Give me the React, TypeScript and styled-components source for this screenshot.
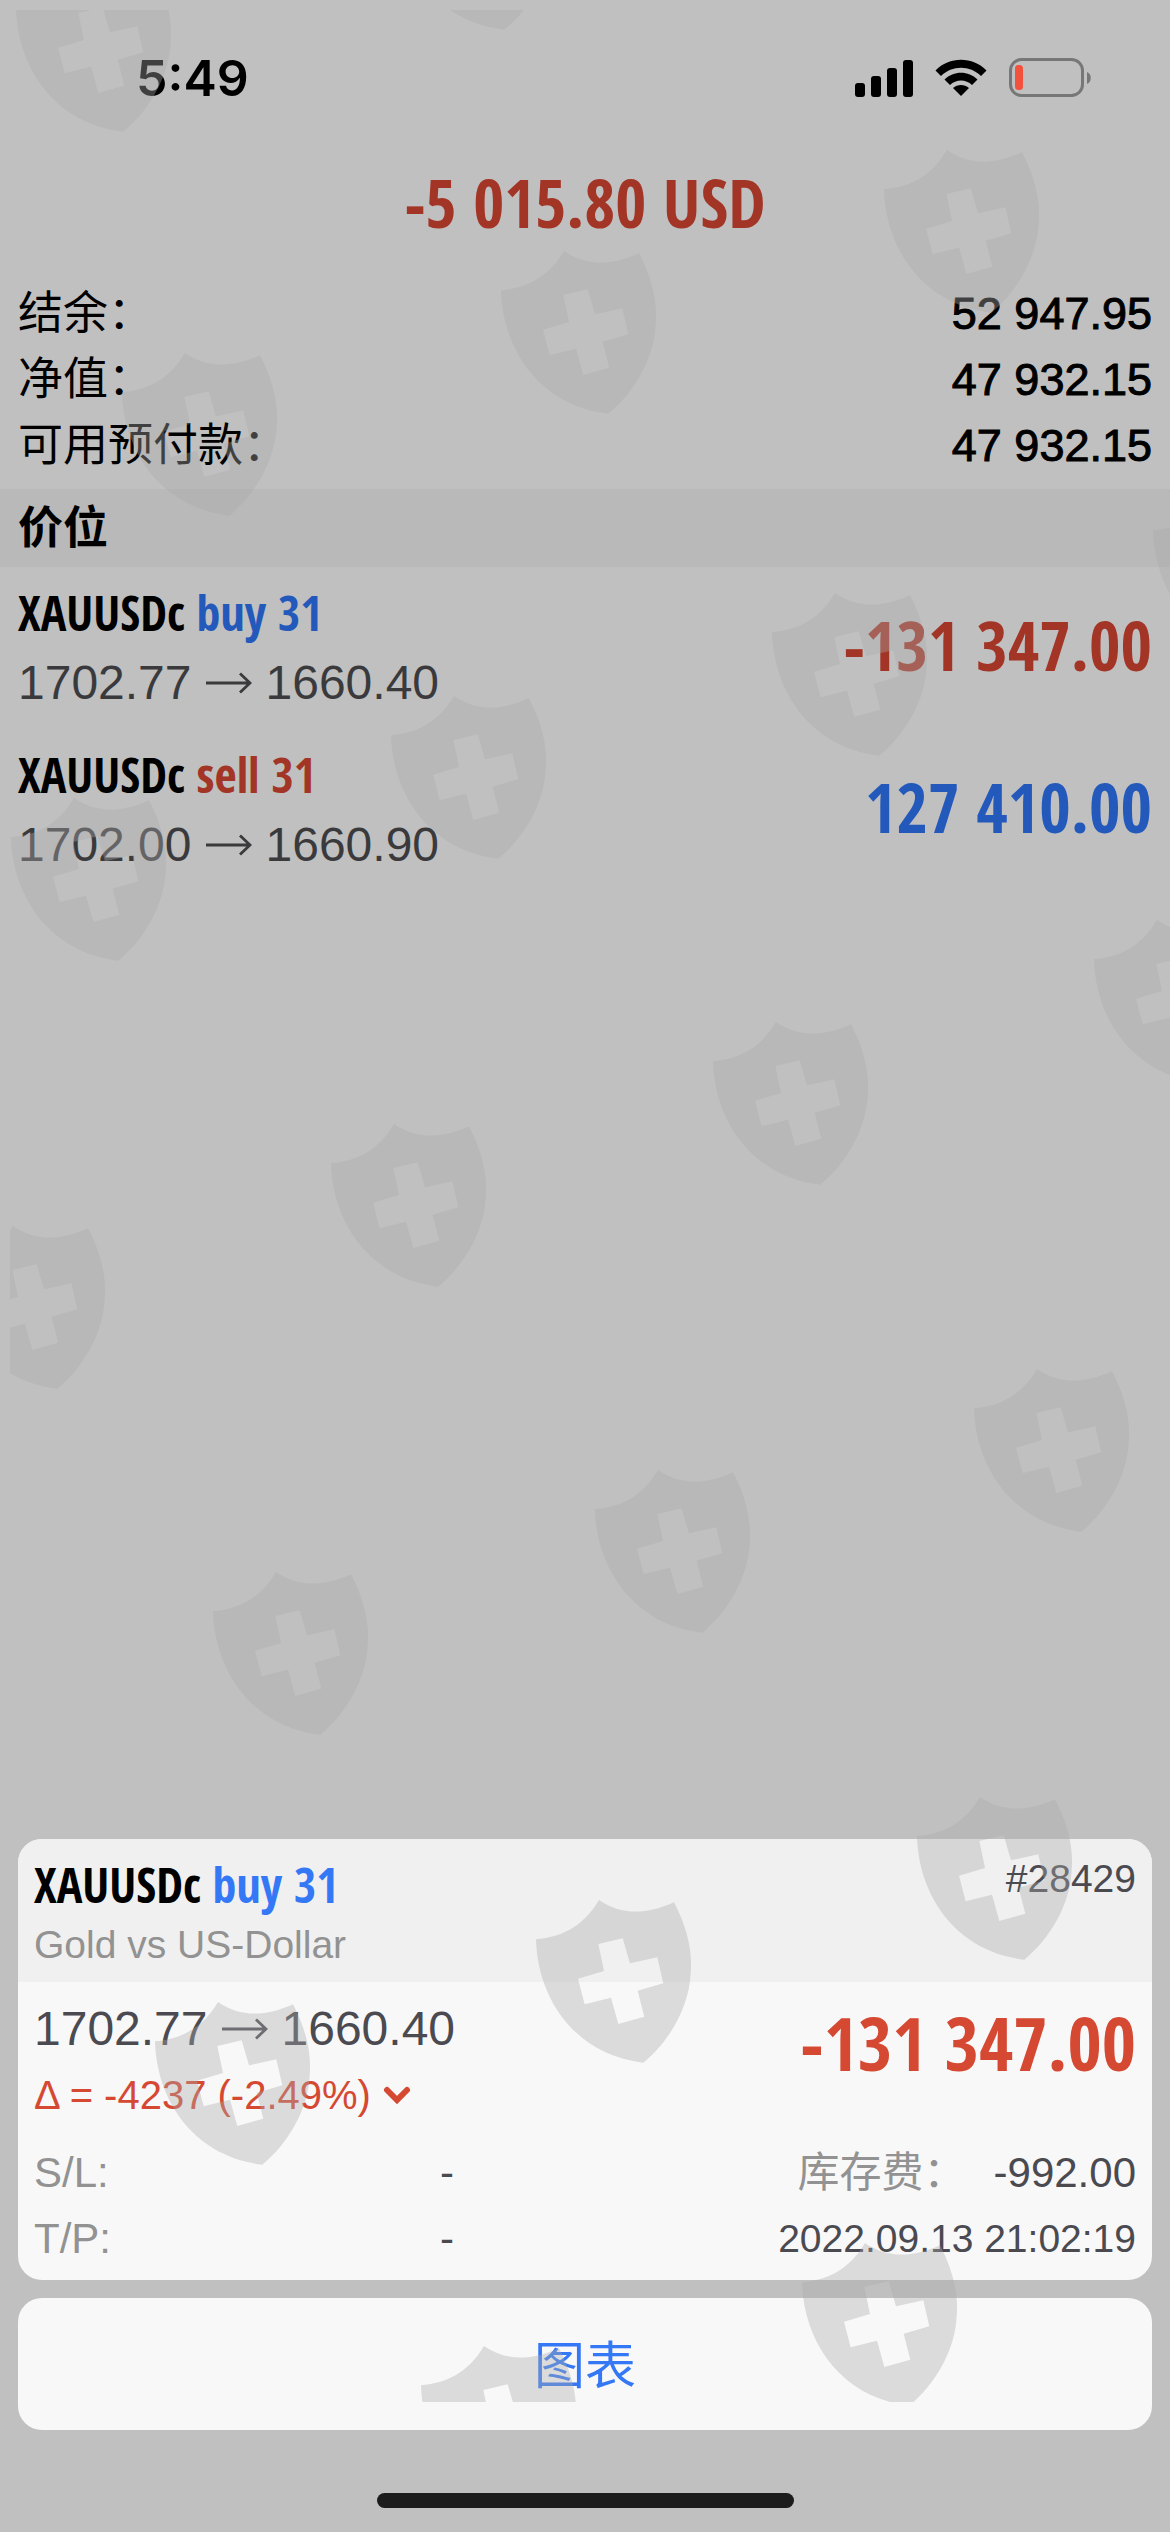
import React from "react";
import styled, { createGlobalStyle } from "styled-components";

const sans = `"Liberation Sans", "Noto Sans CJK SC", sans-serif`;
const narrow = `"Open Sans Condensed", "Noto Sans CJK SC", sans-serif`;

const dim = { red: "#a33527", blue: "#2459bc" };
const lit = { red: "#d54832", blue: "#3478f6" };

const GlobalStyle = createGlobalStyle`
  * { box-sizing: border-box; }
  body { margin: 0; background: #c0c0c0; }
`;

const Screen = styled.div`
  position: relative;
  display: flex;
  flex-direction: column;
  min-height: 100vh;
  overflow: hidden;
  background: #c0c0c0;
  color: #000;
  font-family: ${sans};
`;

const StatusBar = styled.header`
  display: flex;
  align-items: center;
  justify-content: space-between;
  height: 156px;
  padding: 0 78px 0 136px;
`;

const Clock = styled.time`
  font: 600 50px/60px Inter, sans-serif;
`;

const StatusIcons = styled.div`
  display: flex;
  align-items: center;
  gap: 22px;

  svg {
    display: block;
  }
`;

const Total = styled.h1<{ $color: string }>`
  margin: 0;
  padding: 10px 18px 14px;
  text-align: center;
  color: ${(p) => p.$color};
  font: 700 67px/72px ${narrow};
`;

const Summary = styled.dl`
  margin: 0;
  padding: 29px 18px 10px;
`;

const SummaryRow = styled.div`
  display: flex;
  justify-content: space-between;
  font-size: 45px;
  line-height: 66px;
`;

const Term = styled.dt`
  margin: 0;
`;

const Sum = styled.dd`
  margin: 0;
  -webkit-text-stroke: 1px currentColor;
`;

const SectionTitle = styled.h2`
  margin: 0;
  padding: 2px 18px 0;
  background: #b9b9b9;
  font: 700 45px/76px ${sans};
`;

const Positions = styled.ul`
  flex: 1;
  margin: 0;
  padding: 0;
  list-style: none;
`;

const Position = styled.li`
  display: flex;
  align-items: center;
  justify-content: space-between;
  height: 162px;
  padding: 0 18px;
`;

const Quote = styled.div`
  display: flex;
  flex-direction: column;
  gap: 4px;
`;

const Symbol = styled.div`
  font: 700 48px/66px ${narrow};
`;

const Side = styled.span<{ $color: string }>`
  color: ${(p) => p.$color};
`;

const Price = styled.div<{ $color: string }>`
  display: flex;
  align-items: center;
  gap: 14px;
  color: ${(p) => p.$color};
  font-size: 48px;
  line-height: 66px;
`;

const Amount = styled.div<{ $color: string; $size: number }>`
  padding-bottom: 6px;
  color: ${(p) => p.$color};
  font: 700 ${(p) => p.$size}px/72px ${narrow};
`;

const Sheet = styled.section`
  display: flex;
  flex-direction: column;
  gap: 18px;
  padding: 0 18px;
`;

const Card = styled.article`
  overflow: hidden;
  border-radius: 24px;
  background: #f8f8f8;
  color: #4a4a50;
`;

const CardHead = styled.div`
  display: flex;
  justify-content: space-between;
  height: 143px;
  padding: 13px 16px 0;
  background: #f0f0f0;
  font-size: 39px;
  line-height: 54px;
`;

const CardSymbol = styled(Symbol)`
  color: #000;
`;

const Description = styled.div`
  color: #929292;
`;

const CardBody = styled.div`
  padding: 14px 16px 0;
`;

const CardRow = styled.div`
  display: flex;
  align-items: flex-start;
  justify-content: space-between;
`;

const Profit = styled.div`
  padding-top: 11px;
`;

const Delta = styled.div`
  display: flex;
  align-items: center;
  gap: 12px;
  color: ${lit.red};
  font-size: 40px;
  line-height: 66px;
`;

const Details = styled.div`
  display: grid;
  grid-template-columns: 420px 1fr;
  column-gap: 40px;
  padding: 12px 0 8px;
`;

const Pair = styled.div<{ $end?: boolean; $size?: number }>`
  display: flex;
  justify-content: ${(p) => (p.$end ? "flex-end" : "space-between")};
  gap: 28px;
  font-size: ${(p) => p.$size ?? 42}px;
  line-height: 66px;
`;

const Label = styled.span`
  color: #929292;
`;

const ChartButton = styled.button`
  height: 132px;
  padding: 6px 0 0;
  border: 0;
  border-radius: 24px;
  background: #f8f8f8;
  color: ${lit.blue};
  font: 400 51px/66px ${sans};
`;

const HomeArea = styled.footer`
  display: flex;
  align-items: flex-end;
  justify-content: center;
  height: 102px;
  padding-bottom: 24px;

  &::after {
    content: "";
    width: 417px;
    height: 15px;
    border-radius: 8px;
    background: #1c1c1c;
  }
`;

const Overlay = styled.svg`
  position: absolute;
  top: 10px;
  left: 10px;
  width: calc(100% - 10px);
  height: calc(100% - 140px);
  overflow: hidden;
  pointer-events: none;
`;

const shields = [
  [6, -41], [387, -143],
  [874, 140], [491, 241], [112, 343],
  [1143, 481], [762, 583], [381, 686], [1, 788],
  [1084, 910], [703, 1012], [321, 1114], [-60, 1216],
  [964, 1359], [585, 1460], [203, 1562],
  [907, 1787], [526, 1890], [145, 1992],
  [792, 2233], [411, 2336],
];

const shieldPath =
  "M0 118C70 112 140 84 189 0C250 42 325 48 414 7C452 80 470 150 464 220C460 320 400 425 322 488C120 465 5 300 0 118Z" +
  "M187 132L260 115L282 190L364 172L382 250L305 272L325 350L247 372L225 293L146 313L126 236L204 213Z";

function Watermark() {
  return (
    <Overlay aria-hidden="true">
      {shields.map(([x, y]) => (
        <path
          key={`${x},${y}`}
          d={shieldPath}
          fill="#aaaaaa"
          fillOpacity="0.375"
          fillRule="evenodd"
          transform={`translate(${x} ${y}) scale(0.3333)`}
        />
      ))}
    </Overlay>
  );
}

function Arrow() {
  return (
    <svg width="46" height="24" viewBox="0 0 46 24" fill="none" stroke="currentColor" strokeWidth="2.8" aria-hidden="true">
      <path d="M0 12H44M34 2.5L44 12L34 21.5" />
    </svg>
  );
}

function Signal() {
  return (
    <svg width="58" height="38" viewBox="0 0 58 38" aria-hidden="true">
      <rect x="0" y="24" width="10" height="14" rx="3" />
      <rect x="16" y="17" width="10" height="21" rx="3" />
      <rect x="32" y="9" width="10" height="29" rx="3" />
      <rect x="48" y="1" width="10" height="37" rx="3" />
    </svg>
  );
}

function Wifi() {
  return (
    <svg width="52" height="38" viewBox="0 0 52 38" aria-hidden="true">
      <path d="M0.5 11.5C14 -2.8 38 -2.8 51.500 11.5L46 17C35 6 17 6 6 17Z" />
      <path d="M9.500 20.500C18.500 11.500 33.500 11.500 42.500 20.500L37 26C31 20 21 20 15 26Z" />
      <path d="M18 29C22.500 25 29.500 25 34 29L26 37Z" />
    </svg>
  );
}

function Battery() {
  return (
    <svg width="83" height="40" viewBox="0 0 83 40" aria-hidden="true">
      <rect x="1.500" y="1.500" width="72" height="36" rx="11" fill="none" stroke="#777777" strokeWidth="3" />
      <rect x="6" y="7" width="8" height="25" rx="3.500" fill="#f4513d" />
      <path d="M78 14C83 15.500 83 24.500 78 26Z" fill="#777777" />
    </svg>
  );
}

function Chevron() {
  return (
    <svg width="28" height="20" viewBox="0 0 28 20" fill="none" stroke="currentColor" strokeWidth="6" strokeLinecap="round" aria-hidden="true">
      <path d="M4 5L14 15L24 5" />
    </svg>
  );
}

const summary = [
  ["结余：", "52 947.95"],
  ["净值：", "47 932.15"],
  ["可用预付款：", "47 932.15"],
];

const positions = [
  { side: "buy 31", sideColor: dim.blue, from: "1702.77", to: "1660.40", amount: "-131 347.00", color: dim.red },
  { side: "sell 31", sideColor: dim.red, from: "1702.00", to: "1660.90", amount: "127 410.00", color: dim.blue },
];

export default function App() {
  return (
    <Screen>
      <GlobalStyle />
      <StatusBar>
        <Clock>5:49</Clock>
        <StatusIcons>
          <Signal />
          <Wifi />
          <Battery />
        </StatusIcons>
      </StatusBar>
      <Total $color={dim.red}>-5 015.80 USD</Total>
      <Summary>
        {summary.map(([label, value]) => (
          <SummaryRow key={label}>
            <Term>{label}</Term>
            <Sum>{value}</Sum>
          </SummaryRow>
        ))}
      </Summary>
      <SectionTitle>价位</SectionTitle>
      <Positions>
        {positions.map((p) => (
          <Position key={p.side}>
            <Quote>
              <Symbol>
                XAUUSDc <Side $color={p.sideColor}>{p.side}</Side>
              </Symbol>
              <Price $color="#3a3a3d">
                {p.from}
                <Arrow />
                {p.to}
              </Price>
            </Quote>
            <Amount $color={p.color} $size={68}>{p.amount}</Amount>
          </Position>
        ))}
      </Positions>
      <Sheet>
        <Card>
          <CardHead>
            <div>
              <CardSymbol>
                XAUUSDc <Side $color={lit.blue}>buy 31</Side>
              </CardSymbol>
              <Description>Gold vs US-Dollar</Description>
            </div>
            <div>#28429</div>
          </CardHead>
          <CardBody>
            <CardRow>
              <div>
                <Price $color="#4a4a50">
                  1702.77
                  <Arrow />
                  1660.40
                </Price>
                <Delta>
                  Δ = -4237 (-2.49%)
                  <Chevron />
                </Delta>
              </div>
              <Profit>
                <Amount $color={lit.red} $size={74}>-131 347.00</Amount>
              </Profit>
            </CardRow>
            <Details>
              <Pair>
                <Label>S/L:</Label>
                <span>-</span>
              </Pair>
              <Pair $end>
                <Label>库存费：</Label>
                <span>-992.00</span>
              </Pair>
              <Pair>
                <Label>T/P:</Label>
                <span>-</span>
              </Pair>
              <Pair $end $size={39}>2022.09.13 21:02:19</Pair>
            </Details>
          </CardBody>
        </Card>
        <ChartButton type="button">图表</ChartButton>
      </Sheet>
      <HomeArea />
      <Watermark />
    </Screen>
  );
}
